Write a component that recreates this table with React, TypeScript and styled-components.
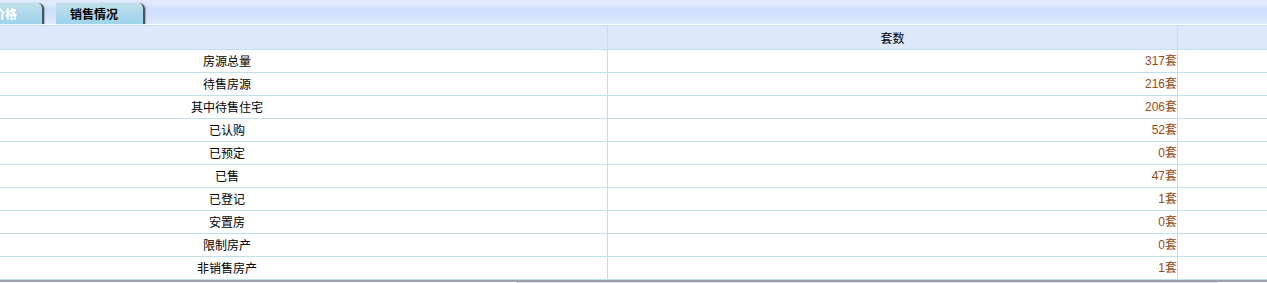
import React from "react";
import styled, { createGlobalStyle } from "styled-components";

const Global = createGlobalStyle`
  html, body { margin: 0; padding: 0; background: #ffffff; overflow: hidden; }
  body { font-family: "Noto Sans CJK SC", "Liberation Sans", sans-serif; font-size: 12px; }
`;

const Page = styled.div`
  width: 1267px;
  height: 283px;
  overflow: hidden;
  display: flex;
  flex-direction: column;
  background: #fff;
`;

const TabStrip = styled.div`
  height: 24px;
  display: flex;
  align-items: flex-end;
  gap: 12px;
  background: linear-gradient(#e1ebfb 0px, #dbe7fc 5px, #cddffd 9px, #d3e2fc 16px, #dde9fb 22px);
  margin-left: -45px;
  border-bottom: 1px solid #ffffff;
`;

const Tab = styled.div<{ $active?: boolean }>`
  height: 21px;
  width: 89px;
  box-sizing: border-box;
  padding-left: 14px;
  display: flex;
  align-items: center;
  font-weight: bold;
  font-size: 12px;
  color: ${(p) => (p.$active ? "#000" : "#fff")};
  background: linear-gradient(#c3e0ea, #a8d7ea 60%, #9fd5ec);
  border-top-right-radius: 6px;
  border-right: 2px solid #4e5358;
  box-shadow: 1px 0 1px rgba(0, 0, 0, 0.25);
  white-space: nowrap;
`;

const Table = styled.table`
  border-collapse: collapse;
  margin-left: -154px;
  table-layout: fixed;
  width: 1532px;
  border-top: 1px solid #bfe0ec;
`;

const Col = styled.col<{ $w: number }>`
  width: ${(p) => p.$w}px;
`;

const HeadCell = styled.th`
  height: 23px;
  padding: 0;
  background: #dde9fb;
  border: 1px solid #bfe0ec;
  font-weight: normal;
  font-size: 12px;
  color: #000;
  text-align: center;
`;

const Cell = styled.td<{ $align?: string; $value?: boolean }>`
  height: 22px;
  padding: 0;
  border: 1px solid #bfe0ec;
  text-align: ${(p) => p.$align || "center"};
  color: ${(p) => (p.$value ? "#9a4a12" : "#000")};
  font-family: ${(p) =>
    p.$value
      ? `"Liberation Sans", "Noto Sans CJK SC", sans-serif`
      : `"Noto Sans CJK SC", sans-serif`};
  font-size: 12px;
  line-height: 22px;
`;

const BottomBar = styled.div`
  flex: 1;
  border-top: 2px solid #9aa3ab;
  display: flex;
  background: #fff;
`;

const Thumb = styled.div`
  margin-left: 517px;
  width: 700px;
  background: linear-gradient(#e8e8e8, #d8d8d8);
  border-left: 1px solid #aaa;
`;

const rows: [string, string][] = [
  ["房源总量", "317"],
  ["待售房源", "216"],
  ["其中待售住宅", "206"],
  ["已认购", "52"],
  ["已预定", "0"],
  ["已售", "47"],
  ["已登记", "1"],
  ["安置房", "0"],
  ["限制房产", "0"],
  ["非销售房产", "1"],
];

export default function App() {
  return (
    <Page>
      <Global />
      <TabStrip>
        <Tab>参考价格</Tab>
        <Tab $active>销售情况</Tab>
      </TabStrip>
      <Table>
        <colgroup>
          <Col $w={761} />
          <Col $w={570} />
          <Col $w={201} />
        </colgroup>
        <thead>
          <tr>
            <HeadCell></HeadCell>
            <HeadCell>套数</HeadCell>
            <HeadCell></HeadCell>
          </tr>
        </thead>
        <tbody>
          {rows.map(([label, n]) => (
            <tr key={label}>
              <Cell>{label}</Cell>
              <Cell $align="right" $value>
                {n}套
              </Cell>
              <Cell></Cell>
            </tr>
          ))}
        </tbody>
      </Table>
      <BottomBar>
        <Thumb />
      </BottomBar>
    </Page>
  );
}
